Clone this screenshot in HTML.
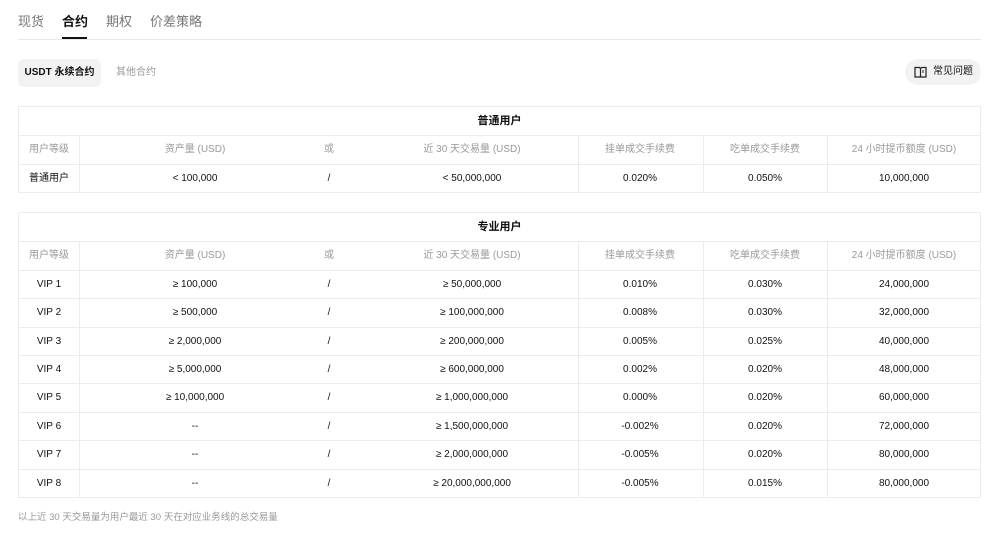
<!DOCTYPE html>
<html><head><meta charset="utf-8"><style>
*{margin:0;padding:0;box-sizing:border-box}
body{width:1000px;height:538px;background:#fff;font-family:"Liberation Sans","Noto Sans CJK SC",sans-serif;color:#111;position:relative;overflow:hidden}
.a{position:absolute}
.tab{position:absolute;top:11px;font-size:13px;color:#777}
.tbl{position:absolute;left:18px;width:963px;border:1px solid #ececec}
.row{position:relative;height:28.4px;border-top:1px solid #ececec;font-size:10px}
.row:first-child{border-top:none}
.c{position:absolute;top:0;height:100%;line-height:27px;text-align:center;transform:translateX(-50%);white-space:nowrap}
.vl{position:absolute;top:0;height:100%;border-left:1px solid #ececec}
.h{color:#999}
.t{text-align:center;font-weight:bold;font-size:11px;line-height:28px;height:28.4px}
</style></head><body>
<div class="tab" style="left:18px">现货</div>
<div class="tab" style="left:62px;color:#111;font-weight:bold">合约</div>
<div class="tab" style="left:106px">期权</div>
<div class="tab" style="left:150px">价差策略</div>
<div class="a" style="left:18px;top:39px;width:963px;height:1px;background:#e8e8e8"></div>
<div class="a" style="left:62px;top:37px;width:25px;height:2px;background:#111"></div>
<div class="a" style="left:18px;top:59px;width:83px;height:28px;background:#f2f2f2;border-radius:6px;font-size:10px;font-weight:bold;line-height:28px;text-align:center">USDT 永续合约</div>
<div class="a" style="left:116px;top:59px;font-size:10px;color:#999;line-height:28px">其他合约</div>
<div class="a" style="left:905px;top:59px;width:76px;height:26px;background:#f2f2f2;border-radius:13px;font-size:10px;line-height:26px;padding-left:28px">常见问题</div>
<svg class="a" style="left:914px;top:66px" width="13" height="12" viewBox="0 0 13 12"><path d="M1 1.5h4.5l1 1v8.5H1z M6.5 2.5l1-1H12v9.5H6.5z" fill="none" stroke="#222" stroke-width="1.2"/><path d="M9 4v3" stroke="#222"/></svg>

<div class="tbl" style="top:106px">
<div class="row t">普通用户</div>
<div class="row h" id="h1"></div>
<div class="row"></div>
</div>
<div class="tbl" style="top:212px">
<div class="row t">专业用户</div>
<div class="row h"></div>
<div class="row"></div><div class="row"></div><div class="row"></div><div class="row"></div><div class="row"></div><div class="row"></div><div class="row"></div><div class="row"></div>
</div>
<div class="a" style="left:18px;top:509px;font-size:9.5px;color:#999">以上近 30 天交易量为用户最近 30 天在对应业务线的总交易量</div>
<script>
const hdr=["用户等级","资产量 (USD)","或","近 30 天交易量 (USD)","挂单成交手续费","吃单成交手续费","24 小时提币额度 (USD)"];
const xs=[30,176,310,453,621,746,885];
const d1=[["普通用户","< 100,000","/","< 50,000,000","0.020%","0.050%","10,000,000"]];
const d2=[["VIP 1","≥ 100,000","/","≥ 50,000,000","0.010%","0.030%","24,000,000"],
["VIP 2","≥ 500,000","/","≥ 100,000,000","0.008%","0.030%","32,000,000"],
["VIP 3","≥ 2,000,000","/","≥ 200,000,000","0.005%","0.025%","40,000,000"],
["VIP 4","≥ 5,000,000","/","≥ 600,000,000","0.002%","0.020%","48,000,000"],
["VIP 5","≥ 10,000,000","/","≥ 1,000,000,000","0.000%","0.020%","60,000,000"],
["VIP 6","--","/","≥ 1,500,000,000","-0.002%","0.020%","72,000,000"],
["VIP 7","--","/","≥ 2,000,000,000","-0.005%","0.020%","80,000,000"],
["VIP 8","--","/","≥ 20,000,000,000","-0.005%","0.015%","80,000,000"]];
function fill(tbl,data){
 const rows=tbl.querySelectorAll('.row');
 const all=[hdr,...data];
 for(let i=1;i<rows.length;i++){
  let h='';
  [60,559,684,808].forEach(x=>h+=`<div class="vl" style="left:${x}px"></div>`);
  all[i-1].forEach((t,j)=>{h+=`<div class="c" style="left:${xs[j]}px">${t}</div>`});
  rows[i].innerHTML=h;
 }
}
const t=document.querySelectorAll('.tbl');fill(t[0],d1);fill(t[1],d2);
</script>
</body></html>
